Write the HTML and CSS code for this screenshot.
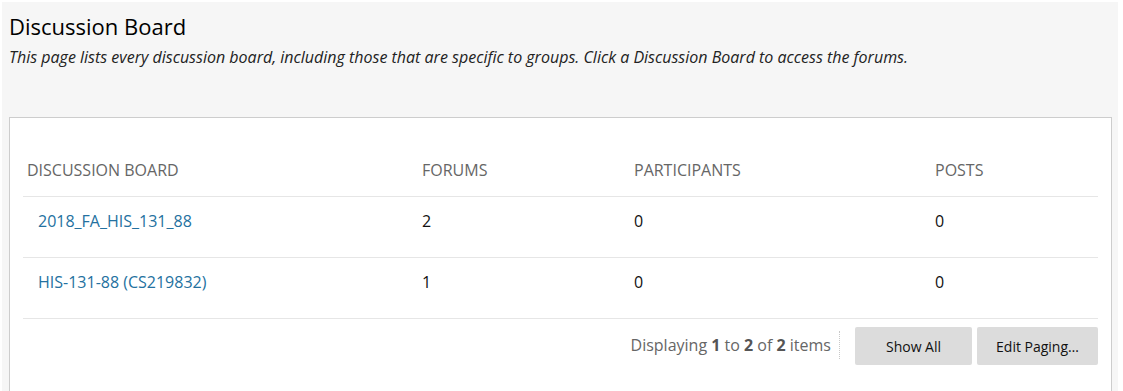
FILE: index.html
```html
<!DOCTYPE html>
<html lang="en">
<head>
<meta charset="utf-8">
<title>Discussion Board</title>
<link rel="stylesheet" href="styles.css">
</head>
<body>
<div class="frame">
  <div class="content">
    <h1 class="title">Discussion Board</h1>
    <p class="desc">This page lists every discussion board, including those that are specific to groups. Click a Discussion Board to access the forums.</p>
    <div class="panel">
      <table class="grid">
        <thead>
          <tr>
            <th class="c1">Discussion Board</th>
            <th class="c2">Forums</th>
            <th class="c3">Participants</th>
            <th class="c4">Posts</th>
          </tr>
        </thead>
        <tbody>
          <tr>
            <td class="c1"><a class="link" href="#">2018_FA_HIS_131_88</a></td>
            <td>2</td>
            <td>0</td>
            <td>0</td>
          </tr>
          <tr>
            <td class="c1"><a class="link" href="#">HIS-131-88 (CS219832)</a></td>
            <td>1</td>
            <td>0</td>
            <td>0</td>
          </tr>
        </tbody>
      </table>
      <div class="pager">
        <span class="count">Displaying <b>1</b> to <b>2</b> of <b>2</b> items</span>
        <span class="sep"></span>
        <button class="btn btn-show">Show All</button>
        <button class="btn btn-edit">Edit Paging…</button>
      </div>
    </div>
  </div>
</div>
</body>
</html>
```
FILE: styles.css
```css
html, body {
  margin: 0;
  padding: 0;
  background: #ffffff;
  height: 100%;
}
body {
  font-family: "Open Sans", "Noto Sans", sans-serif;
  color: #000;
  overflow: hidden;
}
.frame {
  padding: 2px 5px 0 2px;
  height: 100%;
  box-sizing: border-box;
}
.content {
  background: #f6f6f6;
  height: 100%;
  padding: 8px 6px 0 7px;
  box-sizing: border-box;
}
.title {
  margin: 0;
  font-size: 22px;
  font-weight: 400;
  line-height: 32px;
  color: #000;
}
.desc {
  margin: 5px 0 0 0;
  font-size: 16px;
  font-style: italic;
  line-height: 20px;
  color: #222;
}
.panel {
  margin-top: 50px;
  background: #fff;
  border: 1px solid #cdcdcd;
  border-bottom: none;
  padding: 26px 13px 40px 13px;
  height: 400px;
  box-sizing: border-box;
}
.grid {
  width: 100%;
  border-collapse: collapse;
  table-layout: fixed;
}
.grid th {
  text-align: left;
  font-weight: 400;
  text-transform: uppercase;
  font-size: 16px;
  color: #666;
  line-height: 20px;
  padding: 16px 4px 16px 4px;
  border-bottom: 1px solid #e6e6e6;
}
.grid th.c1 { width: 387px; }
.grid th.c2 { width: 204px; }
.grid th.c3 { width: 293px; }
.grid td {
  font-size: 16px;
  line-height: 20px;
  color: #111;
  padding: 14px 4px 26px 4px;
  border-bottom: 1px solid #e6e6e6;
}
.grid td.c1 { padding-left: 15px; }
.link {
  color: #2471a0;
  text-decoration: none;
}
.pager {
  display: flex;
  justify-content: flex-end;
  align-items: center;
  margin-top: 8px;
}
.count {
  font-size: 16px;
  color: #666;
  line-height: 20px;
  margin-bottom: 3px;
}
.count b {
  color: #555;
  font-weight: 700;
}
.sep {
  width: 0;
  height: 28px;
  border-left: 1px dotted #c8c8c8;
  margin: 0 15px 3px 8px;
}
.btn {
  font-family: "Open Sans", "Noto Sans", sans-serif;
  font-size: 14px;
  color: #111;
  background: #dcdcdc;
  border: none;
  border-radius: 2px;
  height: 38px;
  padding: 0;
  margin: 0;
}
.btn-show { width: 117px; }
.btn-edit { width: 121px; margin-left: 5px; }
```
